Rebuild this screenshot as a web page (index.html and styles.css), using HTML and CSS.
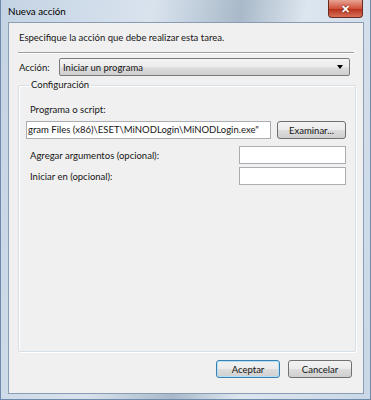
FILE: index.html
```html
<!DOCTYPE html>
<html lang="es">

<head>
    <meta charset="UTF-8">
    <title>Nueva acción</title>
    <link rel="stylesheet" href="styles.css">
</head>

<body>

    <div class="window">
        <div class="titlebar">
            <span class="title">Nueva acción</span>
            <button class="close-btn">&#x2715;</button>
        </div>

        <div class="content">
            <p class="intro">Especifique la acción que debe realizar esta tarea.</p>
            <div class="separator"></div>

            <div class="action-row">
                <label>Acción:</label>
                <div class="select">
                    <span>Iniciar un programa</span>
                    <span class="arrow"></span>
                </div>
            </div>

            <fieldset class="group">
                <legend>Configuración</legend>

                <div class="field-label">Programa o script:</div>
                <div class="program-row">
                    <div class="textbox wide">gram Files (x86)\ESET\MiNODLogin\MiNODLogin.exe"</div>
                    <button class="btn browse">Examinar...</button>
                </div>

                <div class="opt-row first">
                    <span>Agregar argumentos (opcional):</span>
                    <div class="textbox small"></div>
                </div>
                <div class="opt-row">
                    <span>Iniciar en (opcional):</span>
                    <div class="textbox small"></div>
                </div>
            </fieldset>

            <div class="buttons">
                <button class="btn default">Aceptar</button>
                <button class="btn">Cancelar</button>
            </div>
        </div>
    </div>

</body>

</html>
```

FILE: styles.css
```css
body {
    margin: 0;
    font-family: Lato, "Liberation Sans", sans-serif;
    font-size: 9.5px;
    color: #151515;
    background: #ffffff;
}

.window {
    width: 371px;
    height: 400px;
    box-sizing: border-box;
    padding: 0 6px 5px 7px;
    display: flex;
    flex-direction: column;
    background: linear-gradient(100deg, #c4d3e3 0%, #d9e3ee 35%, #a9b9c9 55%, #dde6ef 70%, #c9d7e6 100%);
    border-left: 1px solid #6f8bab;
    border-right: 1px solid #6f8bab;
    border-bottom: 1px solid #6f8bab;
}

.titlebar {
    height: 22px;
    display: flex;
    align-items: flex-start;
    justify-content: space-between;
}

.title {
    margin-top: 5px;
    font-size: 9.8px;
    color: #000;
}

.close-btn {
    width: 35px;
    height: 18px;
    margin-right: 1px;
    border: 1px solid #6a2a1e;
    border-top: none;
    border-radius: 0 0 4px 4px;
    background: linear-gradient(#e8a494 0%, #d1523c 50%, #b8331c 55%, #d8705a 100%);
    color: #fff;
    font-size: 11px;
    font-weight: bold;
    line-height: 16px;
    padding: 0;
    text-shadow: 0 0 2px #5a1a10;
}

.content {
    flex: 1;
    box-sizing: border-box;
    background: #f0f0f0;
    border: 1px solid #8b9db3;
    padding: 0 9px 0 9px;
    display: flex;
    flex-direction: column;
}

.intro {
    margin: 8px 0 0 1px;
    line-height: 14px;
}

.separator {
    margin-top: 7px;
    border-top: 1px solid #a0a0a0;
    border-bottom: 1px solid #ffffff;
}

.action-row {
    display: flex;
    align-items: center;
    margin-top: 4px;
    padding-left: 1px;
}

.action-row label {
    width: 40px;
}

.select {
    flex: 1;
    height: 18px;
    box-sizing: border-box;
    margin-right: 4px;
    padding: 0 6px 0 3px;
    display: flex;
    align-items: center;
    justify-content: space-between;
    border: 1px solid #7a7a7a;
    border-radius: 2px;
    background: linear-gradient(#f4f4f4 0%, #ebebeb 50%, #dcdcdc 55%, #cfcfcf 100%);
}

.arrow {
    width: 0;
    height: 0;
    border-left: 3px solid transparent;
    border-right: 3px solid transparent;
    border-top: 4px solid #000;
}

.group {
    margin: 2px 0 0 0;
    height: 274px;
    box-sizing: border-box;
    padding: 11px 9px 0 7px;
    border: 1px solid #d5dfe5;
    box-shadow: inset 1px 1px 0 #ffffff, 1px 1px 0 #ffffff;
    border-radius: 2px;
}

.group legend {
    padding: 0 2px;
    margin-left: 3px;
    line-height: 14px;
}

.field-label {
    margin-left: 4px;
    line-height: 14px;
}

.program-row {
    display: flex;
    align-items: center;
    margin-top: 3px;
    gap: 6px;
}

.textbox {
    height: 18px;
    box-sizing: border-box;
    border: 1px solid #abadb3;
    background: #ffffff;
    line-height: 16px;
    white-space: nowrap;
    overflow: hidden;
}

.wide {
    width: 245px;
    padding-left: 1px;
}

.small {
    width: 107px;
}

.btn {
    font-family: inherit;
    font-size: 9.5px;
    color: #151515;
    height: 18px;
    padding: 0;
    border: 1px solid #707070;
    border-radius: 3px;
    background: linear-gradient(#f2f2f2 0%, #ebebeb 50%, #dddddd 51%, #cfcfcf 100%);
}

.browse {
    width: 69px;
    margin-top: 1px;
}

.opt-row {
    display: flex;
    justify-content: space-between;
    align-items: center;
    margin-top: 3px;
    padding-left: 4px;
}

.opt-row.first {
    margin-top: 7px;
}

.buttons {
    display: flex;
    justify-content: flex-end;
    gap: 8px;
    margin-top: 8px;
    padding-right: 2px;
}

.buttons .btn {
    width: 64px;
}

.default {
    border-color: #3c7fb1;
    box-shadow: inset 0 0 0 1px #aee0f7;
}
```
